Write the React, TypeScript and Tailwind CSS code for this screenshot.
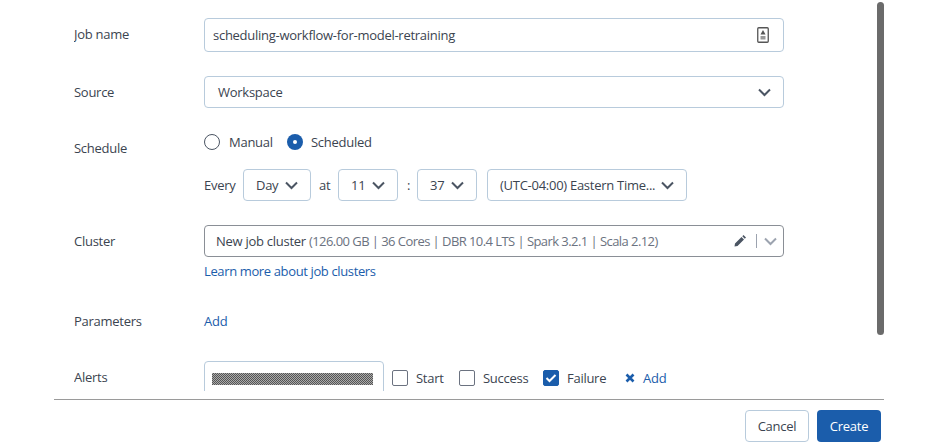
import React from "react";

const Chevron = ({ className = "text-[#4b5563]" }: { className?: string }) => (
  <svg width="13" height="9" viewBox="0 0 13 9" className={className} fill="none">
    <path d="M1 1.5 6.5 7 12 1.5" stroke="currentColor" strokeWidth="2" />
  </svg>
);

const Select = ({ label, className }: { label: string; className: string }) => (
  <div className={`h-8 flex items-center justify-between rounded border border-[#b8cbdc] ${className}`}>
    <span className="whitespace-nowrap">{label}</span>
    <Chevron />
  </div>
);

const Row = ({ label, labelClass, className, children }: { label: string; labelClass: string; className: string; children: React.ReactNode }) => (
  <div className={`flex ${className}`}>
    <div className={`w-[130px] shrink-0 ${labelClass}`}>{label}</div>
    <div className="w-[580px]">{children}</div>
  </div>
);

const Check = ({ label, checked, className }: { label: string; checked?: boolean; className?: string }) => (
  <div className={`flex items-center gap-2 ${className ?? ""}`}>
    <span className={`w-4 h-4 rounded-[2px] border flex items-center justify-center ${checked ? "bg-[#1b5dab] border-[#1b5dab]" : "border-[#6b7280]"}`}>
      {checked && (
        <svg width="12" height="10" viewBox="0 0 12 10" fill="none">
          <path d="M1.5 5 4.5 8l6-6" stroke="white" strokeWidth="2" />
        </svg>
      )}
    </span>
    <span>{label}</span>
  </div>
);

export default function App() {
  return (
    <div className="relative w-[940px] h-[447px] bg-white overflow-hidden text-[13px] leading-[18px] tracking-[-0.27px] text-[#3b4450] font-['Open_Sans','Noto_Sans',sans-serif]">
      <div className="absolute left-[877px] top-[2px] w-[7px] h-[333px] rounded-full bg-[#6b6b6b]" />
      <div className="ml-[74px] h-[391px] overflow-hidden pt-[18px]">
        <Row label="Job name" labelClass="pt-[7px]" className="">
          <div className="h-[34px] flex items-center justify-between pl-2 pr-[14px] rounded border border-[#b8cbdc]">
            <span>scheduling-workflow-for-model-retraining</span>
            <svg width="12" height="16" viewBox="0 0 12 16" fill="none">
              <rect x="0.75" y="0.75" width="10.5" height="14.5" rx="1" stroke="#555" strokeWidth="1.3" />
              <path d="M6 3 8.5 7.5h-5z" fill="#555" />
              <path d="M3.5 9h5v3.5h-5z" fill="#999" />
            </svg>
          </div>
        </Row>
        <Row label="Source" labelClass="pt-[7px]" className="mt-6">
          <div className="h-8 flex items-center justify-between pl-[13px] pr-[12px] rounded border border-[#b8cbdc]">
            <span>Workspace</span>
            <Chevron />
          </div>
        </Row>
        <Row label="Schedule" labelClass="pt-[31px]" className="">
          <div className="flex items-center h-[18px] mt-[25px]">
            <span className="w-4 h-4 rounded-full border border-[#4b5563]" />
            <span className="ml-[9px] w-[49px]">Manual</span>
            <span className="ml-[9px] w-4 h-4 rounded-full bg-[#1b5dab] flex items-center justify-center">
              <span className="w-1 h-1 rounded-full bg-white" />
            </span>
            <span className="ml-2">Scheduled</span>
          </div>
          <div className="flex items-center mt-[18px]">
            <span className="w-[31px]">Every</span>
            <Select label="Day" className="ml-2 w-[68px] pl-[12px] pr-[12px]" />
            <span className="ml-2 w-[11px]">at</span>
            <Select label="11" className="ml-2 w-[60px] pl-[12px] pr-[12px]" />
            <span className="ml-[9px] w-[4px]">:</span>
            <Select label="37" className="ml-[6px] w-[60px] pl-[12px] pr-[12px]" />
            <Select label="(UTC-04:00) Eastern Time..." className="ml-[10px] w-[200px] pl-[12px] pr-[12px]" />
          </div>
        </Row>
        <Row label="Cluster" labelClass="pt-[7px]" className="mt-6">
          <div className="h-8 flex items-center justify-between pl-[11px] pr-[6px] rounded border border-[#8a8f96]">
            <span className="whitespace-nowrap">
              New job cluster <span className="text-[#6b7280] tracking-[-0.56px]">(126.00 GB | 36 Cores | DBR 10.4 LTS | Spark 3.2.1 | Scala 2.12)</span>
            </span>
            <div className="flex items-center">
              <svg width="12" height="12" viewBox="0 0 12 12">
                <path d="M0.5 11.5 1 8.5 7.5 2l2.5 2.5L3.5 11zM8.3 1.2 9.5 0l2.5 2.5-1.2 1.2z" fill="#4b5563" />
              </svg>
              <span className="ml-[10px] w-px h-[14px] bg-[#9ca3af]" />
              <span className="ml-[7px] flex"><Chevron className="text-[#9ca3af]" /></span>
            </div>
          </div>
          <a className="block mt-[5px] text-[#1b5dab] tracking-[-0.37px]">Learn more about job clusters</a>
        </Row>
        <Row label="Parameters" labelClass="" className="mt-[32px]">
          <a className="block text-[#1b5dab]">Add</a>
        </Row>
        <Row label="Alerts" labelClass="pt-[7px]" className="mt-[31px]">
          <div className="flex items-start">
            <div className="w-[180px] h-10 shrink-0 rounded border border-[#b8cbdc] pl-[7px] pr-[10px] pt-[11px]">
              <div className="h-3 bg-[repeating-conic-gradient(#555_0_25%,#aaa_0_50%)] bg-[length:2px_2px]" />
            </div>
            <div className="flex items-center ml-2 mt-[8px]">
              <Check label="Start" className="w-[67px]" />
              <Check label="Success" className="w-[84px]" />
              <Check label="Failure" checked className="w-[82px]" />
              <div className="flex items-center gap-[8px] text-[#1b5dab]">
                <svg width="10" height="10" viewBox="0 0 10 10" fill="none">
                  <path d="M1.5 1.5 8.5 8.5M8.5 1.5 1.5 8.5" stroke="currentColor" strokeWidth="2.6" />
                </svg>
                <span>Add</span>
              </div>
            </div>
          </div>
        </Row>
      </div>
      <div className="ml-[54px] w-[830px] mt-2 border-t border-[#9a9a9a] flex justify-end gap-2 pt-[10px] pr-[3px]">
        <div className="w-16 h-8 rounded border border-[#b8cbdc] flex items-center justify-center">Cancel</div>
        <div className="w-16 h-8 rounded bg-[#1b5dab] text-white flex items-center justify-center">Create</div>
      </div>
    </div>
  );
}
